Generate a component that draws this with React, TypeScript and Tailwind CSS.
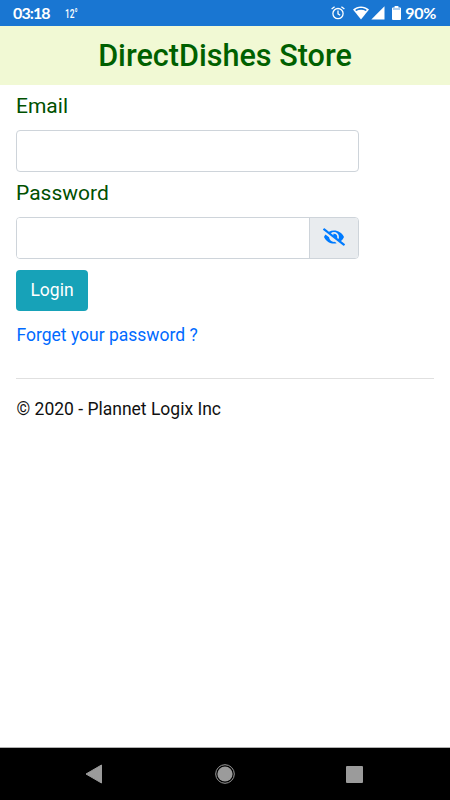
import { useState } from "react";
import { FaEye, FaEyeSlash } from "react-icons/fa";

function AlarmIcon() {
  return (
    <svg viewBox="0 0 14 14" className="h-3.5 w-3.5" fill="none" stroke="currentColor" strokeWidth="1.3">
      <circle cx="7" cy="7.6" r="5.1" />
      <path d="M7 4.6v3.2l2.2 1.4M.6 3 3.6.7M13.4 3l-3-2.3" />
    </svg>
  );
}

function WifiIcon() {
  return (
    <svg viewBox="0 0 16 14" className="h-3.5 w-4">
      <path d="M0 3.6C4.6-.5 11.4-.5 16 3.6L8 13.5Z" fill="currentColor" />
      <path d="M2.2 3.9C5.5 1.5 10.5 1.5 13.8 3.9L12.8 5.1C9.8 3.2 6.2 3.2 3.2 5.1Z" fill="#1976d2" />
    </svg>
  );
}

function StatusBar() {
  return (
    <div className="flex h-[26px] items-center bg-[#1976d2] pl-[13px] pr-[14px] text-white">
      <span className="w-[52px] font-['Lato'] text-[16px] leading-none font-bold tracking-[-0.9px]">03:18</span>
      <span className="flex h-3 w-3 origin-left scale-x-[.64] items-center font-['Roboto'] text-[13px] leading-none font-medium">
        12°
      </span>
      <div className="ml-auto flex items-center">
        <AlarmIcon />
        <span className="ml-2 flex">
          <WifiIcon />
        </span>
        <svg viewBox="0 0 14 14" className="ml-0.5 h-3.5 w-3.5">
          <path d="M13.5.3v13.2H.3Z" fill="currentColor" />
        </svg>
        <svg viewBox="0 0 9 14" className="ml-[7px] h-3.5 w-[9px]">
          <path d="M2.6 0h3.8v1.5H8q1 0 1 1V13q0 1-1 1H1q-1 0-1-1V2.5q0-1 1-1h1.6Z" fill="currentColor" />
          <path d="M1 3h7" stroke="#1976d2" strokeWidth="0.7" />
        </svg>
        <span className="ml-1 font-['Lato'] text-[16px] leading-none font-bold tracking-[-0.3px]">90%</span>
      </div>
    </div>
  );
}

function LoginForm() {
  const [visible, setVisible] = useState(false);

  return (
    <form className="flex flex-col items-start" onSubmit={(e) => e.preventDefault()}>
      <label htmlFor="email" className="mt-[5px] h-8 text-[21px] leading-8 text-[#005000]">
        Email
      </label>
      <input
        id="email"
        type="email"
        className="mt-2 h-[42px] w-[343px] rounded-[4px] border border-[#ced4da] bg-white px-3"
      />
      <label htmlFor="password" className="mt-[5px] h-8 text-[21px] leading-8 text-[#005000]">
        Password
      </label>
      <div className="mt-2 flex h-[42px] w-[343px] overflow-hidden rounded-[4px] border border-[#ced4da]">
        <input id="password" type={visible ? "text" : "password"} className="min-w-0 flex-1 bg-white px-3" />
        <button
          type="button"
          aria-label="Toggle password"
          onClick={() => setVisible((v) => !v)}
          className="flex w-[49px] items-center justify-center border-l border-[#ced4da] bg-[#e9ecef] pb-0.5 text-[#007bff]"
        >
          {visible ? <FaEye className="h-[18px] w-[22px]" /> : <FaEyeSlash className="h-[18px] w-[22px]" />}
        </button>
      </div>
      <button type="submit" className="mt-[11px] h-[41px] w-[72px] rounded-[4px] bg-[#17a2b8] text-[17.5px] text-white">
        Login
      </button>
      <a href="#" className="mt-[11px] pl-[0.5px] text-[17.5px] leading-[26px] text-[#006aff]">
        Forget your password ?
      </a>
    </form>
  );
}

function NavigationBar() {
  return (
    <div className="flex h-[53px] items-center justify-between border-t border-[#b0b0b0] bg-black pr-[87px] pl-[85px] text-[#9b9b9b]">
      <svg viewBox="0 0 18 20" className="h-5 w-[18px]">
        <path d="M1 10 16.5 1v18Z" fill="currentColor" stroke="currentColor" strokeLinejoin="round" />
      </svg>
      <svg viewBox="0 0 20 20" className="h-5 w-5">
        <circle cx="10" cy="10" r="9.3" fill="none" stroke="currentColor" />
        <circle cx="10" cy="10" r="7.6" fill="currentColor" />
      </svg>
      <span className="h-[17px] w-[17px] rounded-[1px] bg-[#9b9b9b]" />
    </div>
  );
}

export default function App() {
  return (
    <div className="flex h-[800px] w-[450px] flex-col bg-white font-['Roboto',sans-serif]">
      <StatusBar />
      <header className="flex h-[59px] items-center justify-center bg-[#f1f9d4] pt-px">
        <h1 className="text-[30.6px] leading-none font-medium text-[#006000]">DirectDishes Store</h1>
      </header>
      <main className="flex-1 px-4">
        <LoginForm />
        <hr className="mt-[30px] border-[#e0e0e0]" />
        <footer className="mt-[17px] pl-[0.5px] text-[17.5px] leading-[26px] text-[#111]">© 2020 - Plannet Logix Inc</footer>
      </main>
      <NavigationBar />
    </div>
  );
}
